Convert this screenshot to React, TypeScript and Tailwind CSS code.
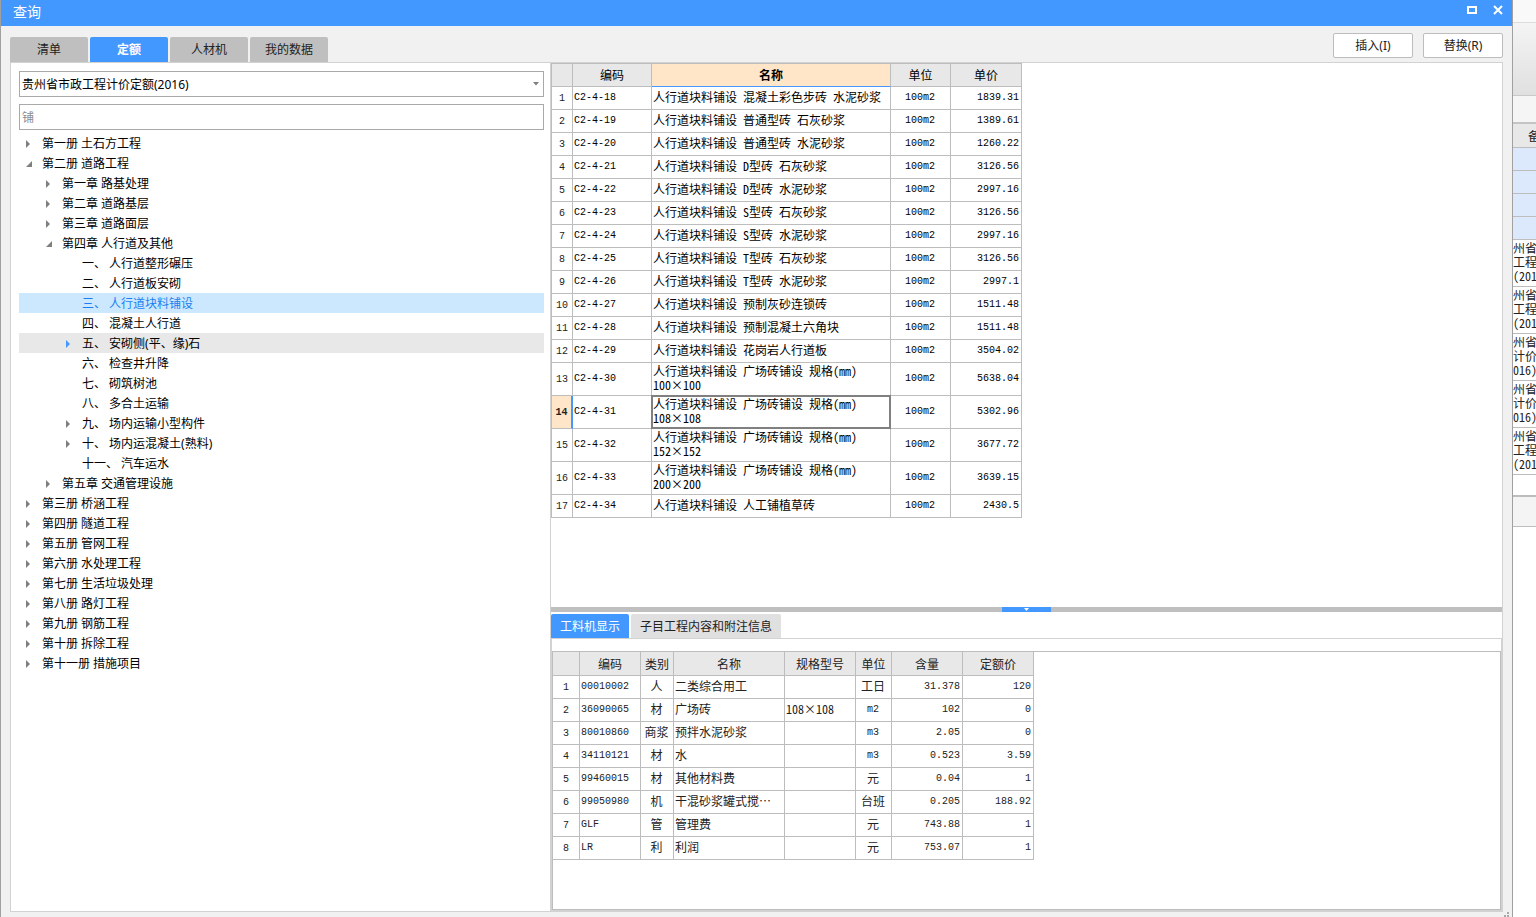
import { useState } from "react";
import clsx from "clsx";

const mainTabs = ["清单", "定额", "人材机", "我的数据"];

type TreeNode = { level: number; text: string; arrow?: "open" | "closed" };

const tree: TreeNode[] = [
  { level: 0, text: "第一册 土石方工程", arrow: "closed" },
  { level: 0, text: "第二册 道路工程", arrow: "open" },
  { level: 1, text: "第一章 路基处理", arrow: "closed" },
  { level: 1, text: "第二章 道路基层", arrow: "closed" },
  { level: 1, text: "第三章 道路面层", arrow: "closed" },
  { level: 1, text: "第四章 人行道及其他", arrow: "open" },
  { level: 2, text: "一、 人行道整形碾压" },
  { level: 2, text: "二、 人行道板安砌" },
  { level: 2, text: "三、 人行道块料铺设" },
  { level: 2, text: "四、 混凝土人行道" },
  { level: 2, text: "五、 安砌侧(平、缘)石", arrow: "closed" },
  { level: 2, text: "六、 检查井升降" },
  { level: 2, text: "七、 砌筑树池" },
  { level: 2, text: "八、 多合土运输" },
  { level: 2, text: "九、 场内运输小型构件", arrow: "closed" },
  { level: 2, text: "十、 场内运混凝土(熟料)", arrow: "closed" },
  { level: 2, text: "十一、 汽车运水" },
  { level: 1, text: "第五章 交通管理设施", arrow: "closed" },
  { level: 0, text: "第三册 桥涵工程", arrow: "closed" },
  { level: 0, text: "第四册 隧道工程", arrow: "closed" },
  { level: 0, text: "第五册 管网工程", arrow: "closed" },
  { level: 0, text: "第六册 水处理工程", arrow: "closed" },
  { level: 0, text: "第七册 生活垃圾处理", arrow: "closed" },
  { level: 0, text: "第八册 路灯工程", arrow: "closed" },
  { level: 0, text: "第九册 钢筋工程", arrow: "closed" },
  { level: 0, text: "第十册 拆除工程", arrow: "closed" },
  { level: 0, text: "第十一册 措施项目", arrow: "closed" },
];

const indents = ["pl-[5px]", "pl-[25px]", "pl-[45px]"];

const quotas = [
  ["C2-4-18", "人行道块料铺设 混凝土彩色步砖 水泥砂浆", "1839.31"],
  ["C2-4-19", "人行道块料铺设 普通型砖 石灰砂浆", "1389.61"],
  ["C2-4-20", "人行道块料铺设 普通型砖 水泥砂浆", "1260.22"],
  ["C2-4-21", "人行道块料铺设 D型砖 石灰砂浆", "3126.56"],
  ["C2-4-22", "人行道块料铺设 D型砖 水泥砂浆", "2997.16"],
  ["C2-4-23", "人行道块料铺设 S型砖 石灰砂浆", "3126.56"],
  ["C2-4-24", "人行道块料铺设 S型砖 水泥砂浆", "2997.16"],
  ["C2-4-25", "人行道块料铺设 T型砖 石灰砂浆", "3126.56"],
  ["C2-4-26", "人行道块料铺设 T型砖 水泥砂浆", "2997.1"],
  ["C2-4-27", "人行道块料铺设 预制灰砂连锁砖", "1511.48"],
  ["C2-4-28", "人行道块料铺设 预制混凝土六角块", "1511.48"],
  ["C2-4-29", "人行道块料铺设 花岗岩人行道板", "3504.02"],
  ["C2-4-30", "人行道块料铺设 广场砖铺设 规格(mm)\n100×100", "5638.04"],
  ["C2-4-31", "人行道块料铺设 广场砖铺设 规格(mm)\n108×108", "5302.96"],
  ["C2-4-32", "人行道块料铺设 广场砖铺设 规格(mm)\n152×152", "3677.72"],
  ["C2-4-33", "人行道块料铺设 广场砖铺设 规格(mm)\n200×200", "3639.15"],
  ["C2-4-34", "人行道块料铺设 人工铺植草砖", "2430.5"],
];

const resources = [
  ["00010002", "人", "二类综合用工", "", "工日", "31.378", "120"],
  ["36090065", "材", "广场砖", "108×108", "m2", "102", "0"],
  ["80010860", "商浆", "预拌水泥砂浆", "", "m3", "2.05", "0"],
  ["34110121", "材", "水", "", "m3", "0.523", "3.59"],
  ["99460015", "材", "其他材料费", "", "元", "0.04", "1"],
  ["99050980", "机", "干混砂浆罐式搅…", "", "台班", "0.205", "188.92"],
  ["GLF", "管", "管理费", "", "元", "743.88", "1"],
  ["LR", "利", "利润", "", "元", "753.07", "1"],
];

const resourceAlign = ["text-left", "text-center", "text-left", "text-left", "text-center", "text-right", "text-right"];

const cell = "border-r border-b border-[#bdbdbd] pt-0 pr-[2px] pl-px";
const headCell = "border-r border-b border-[#bdbdbd] bg-[#e8e8e8] p-0 font-normal";
const gridFont = "font-['Noto_Sans_Mono_CJK_SC','Noto_Sans_CJK_SC',monospace]";
const latin = "pb-0 font-['Liberation_Mono',monospace] text-[10px] leading-[14px]";

const isLatin = (value: string) => /^[\x20-\x7e]+$/.test(value);

function TreeArrow({ type, active }: { type?: "open" | "closed"; active: boolean }) {
  return (
    <svg width="10" height="10" viewBox="0 0 10 10" className="shrink-0">
      {type === "closed" && <path d="M2 1v8l4-4z" fill={active ? "#4398ff" : "#7f7f7f"} />}
      {type === "open" && <path d="M8 2v6H2z" fill="#7f7f7f" />}
    </svg>
  );
}

function QuotaTree() {
  const [selected, setSelected] = useState(8);
  const hovered = 10;

  return (
    <div className="flex w-[539px] shrink-0 flex-col overflow-hidden pt-2 pr-[6px] pl-2">
      <div className="relative">
        <select
          aria-label="定额库"
          className="block h-[26px] w-full appearance-none border border-[#a9a9a9] bg-white px-[2px] pt-[2px] text-xs text-black"
        >
          <option>贵州省市政工程计价定额(2016)</option>
        </select>
        <svg width="6" height="4" viewBox="0 0 6 4" className="pointer-events-none absolute top-[11px] right-[5px]">
          <path d="M0 0h6L3 3.5z" fill="#7f7f7f" />
        </svg>
      </div>
      <input
        type="text"
        aria-label="搜索"
        placeholder="铺"
        className="mt-[7px] h-[26px] w-full border border-[#a9a9a9] bg-white px-[2px] text-xs placeholder:text-[#8c8c8c]"
      />
      <ul className="mt-[3px]">
        {tree.map((node, i) => (
          <li key={node.text}>
            <button
              type="button"
              onClick={() => setSelected(i)}
              className={clsx(
                "flex h-5 w-full items-center gap-2 pt-[2px] text-left whitespace-pre",
                indents[node.level],
                i === selected ? "bg-[#cce8ff] text-[#1a7ff0]" : i === hovered && "bg-[#e8e8e8]"
              )}
            >
              <TreeArrow type={node.arrow} active={i === hovered} />
              {node.text}
            </button>
          </li>
        ))}
      </ul>
    </div>
  );
}

function QuotaTable() {
  const current = 13;

  return (
    <table className={clsx("w-[471px] table-fixed border-separate border-spacing-0 border-t border-l border-[#bdbdbd] leading-[14px] text-black", gridFont)}>
      <colgroup>
        <col className="w-[21px]" />
        <col className="w-[79px]" />
        <col className="w-[239px]" />
        <col className="w-[60px]" />
        <col className="w-[71px]" />
      </colgroup>
      <thead>
        <tr className="h-[23px]">
          <th className={headCell} aria-label="序号"></th>
          <th className={headCell}>编码</th>
          <th className="border-r border-b border-r-[#bdbdbd] border-b-[#4398ff] bg-[#ffe6c8] p-0 font-bold">名称</th>
          <th className={headCell}>单位</th>
          <th className={headCell}>单价</th>
        </tr>
      </thead>
      <tbody>
        {quotas.map(([code, name, price], i) => (
          <tr key={code} className={name.includes("\n") ? "h-[33px]" : "h-[23px]"}>
            <th
              className={clsx(
                "border-b border-b-[#bdbdbd] px-0 pt-[2px] text-[#222]",
                latin,
                i === current
                  ? "border-r-2 border-r-[#4398ff] bg-[#ffe6c8] font-bold"
                  : "border-r border-r-[#bdbdbd] font-normal"
              )}
            >
              {i + 1}
            </th>
            <td className={clsx(cell, latin)}>{code}</td>
            <td className={clsx(cell, "relative pb-[2px] whitespace-pre")}>
              {name}
              {i === current && <span className="absolute -inset-px border-2 border-[#808080]"></span>}
            </td>
            <td className={clsx(cell, latin, "text-center")}>100m2</td>
            <td className={clsx(cell, latin, "text-right")}>{price}</td>
          </tr>
        ))}
      </tbody>
    </table>
  );
}

function ResourceTable() {
  return (
    <table className={clsx("w-[481px] table-fixed border-separate border-spacing-0 leading-[14px] text-[#222]", gridFont)}>
      <colgroup>
        <col className="w-[27px]" />
        <col className="w-[61px]" />
        <col className="w-[33px]" />
        <col className="w-[111px]" />
        <col className="w-[71px]" />
        <col className="w-[36px]" />
        <col className="w-[71px]" />
        <col className="w-[71px]" />
      </colgroup>
      <thead>
        <tr className="h-6">
          <th className={headCell} aria-label="序号"></th>
          {["编码", "类别", "名称", "规格型号", "单位", "含量", "定额价"].map((title) => (
            <th key={title} className={headCell}>{title}</th>
          ))}
        </tr>
      </thead>
      <tbody>
        {resources.map((row, i) => (
          <tr key={row[0]} className="h-[23px]">
            <th className={clsx("border-r border-b border-[#bdbdbd] px-0 pt-[2px] font-normal", latin)}>{i + 1}</th>
            {row.map((value, j) => (
              <td
                key={j}
                className={clsx(cell, "whitespace-nowrap", resourceAlign[j], isLatin(value) ? latin : "pb-[2px]")}
              >
                {value}
              </td>
            ))}
          </tr>
        ))}
      </tbody>
    </table>
  );
}

// the part of the main window that is still visible behind the dialog
function BackgroundWindow() {
  const notes = ["州省\n工程\n(201", "州省\n工程\n(201", "州省\n计价\n016)", "州省\n计价\n016)", "州省\n工程\n(201"];

  return (
    <div className={clsx("flex w-[23px] shrink-0 flex-col overflow-hidden bg-white text-[#222]", gridFont)}>
      <div className="h-[23px] shrink-0 border-b border-[#dcdcdc] bg-[#f9f9f9]"></div>
      <div className="h-[73px] shrink-0 border-b border-[#c8c8c8] bg-linear-to-b from-[#f4f4f4] to-[#e0e0e0]"></div>
      <div className="h-7 shrink-0 border-b-2 border-[#c4c4c4] bg-[#f5f5f5]"></div>
      <div className="flex h-6 shrink-0 items-center border-b border-[#bdbdbd] bg-[#e8e8e8] pl-[15px]">备</div>
      {[0, 1, 2, 3].map((n) => (
        <div key={n} className="h-[23px] shrink-0 border-b border-[#bdbdbd] bg-[#dce9fd]"></div>
      ))}
      {notes.map((note, n) => (
        <div key={n} className="h-[47px] shrink-0 border-b border-[#bdbdbd] pt-px leading-[14px] whitespace-pre">
          {note}
        </div>
      ))}
      <div className="h-[22px] shrink-0 border-b-2 border-[#bdbdbd]"></div>
      <div className="h-[30px] shrink-0 border-b border-[#bdbdbd] bg-[#f4f4f4]"></div>
    </div>
  );
}

function App() {
  const [tab, setTab] = useState("定额");

  return (
    <div className="flex h-screen overflow-hidden bg-white font-['Noto_Sans','Noto_Sans_CJK_SC',sans-serif] text-xs text-black">
      <main className="flex min-w-0 flex-1 flex-col border-x border-[#a0a0a0] bg-[#f1f1f1]">
        <header className="flex h-[26px] shrink-0 items-center justify-between bg-[#4398ff] pr-[9px] pl-3">
          <h1 className="pb-[2px] text-sm leading-5 text-white">查询</h1>
          <div className="flex gap-4 pb-[6px]">
            <button type="button" aria-label="最大化">
              <svg width="10" height="10" viewBox="0 0 10 10" className="block">
                <path d="M1 2h8v6H1z" fill="none" stroke="#fff" strokeWidth="2" />
              </svg>
            </button>
            <button type="button" aria-label="关闭">
              <svg width="10" height="10" viewBox="0 0 10 10" className="block">
                <path d="M1 1l8 8M9 1L1 9" fill="none" stroke="#fff" strokeWidth="2" />
              </svg>
            </button>
          </div>
        </header>

        <div className="flex h-9 shrink-0 items-end justify-between px-[9px]">
          <div className="flex gap-[2px]">
            {mainTabs.map((name) => (
              <button
                key={name}
                type="button"
                onClick={() => setTab(name)}
                className={clsx(
                  "h-[25px] w-[78px] rounded-t-xs",
                  name === tab ? "bg-[#4398ff] font-bold text-white" : "bg-[#bfbfbf] text-[#222]"
                )}
              >
                {name}
              </button>
            ))}
          </div>
          <div className="flex gap-[10px] pb-1">
            <button type="button" className="h-[25px] w-20 rounded-xs border border-[#bdbdbd] bg-white text-[#222]">插入(I)</button>
            <button type="button" className="h-[25px] w-20 rounded-xs border border-[#bdbdbd] bg-white text-[#222]">替换(R)</button>
          </div>
        </div>

        <div className="mx-[9px] flex min-h-0 flex-1 border border-[#d2d2d2] bg-white">
          <QuotaTree />

          <div className="flex min-w-0 flex-1 flex-col border-l border-[#d2d2d2]">
            <div className="min-h-0 flex-1 overflow-hidden">
              <QuotaTable />
            </div>

            <div className="flex h-[5px] shrink-0 justify-center bg-[#bfbfbf]">
              <button type="button" aria-label="收起" className="flex w-[49px] items-center justify-center bg-[#4398ff]">
                <svg width="5" height="3" viewBox="0 0 5 3">
                  <path d="M0 0h5L2.5 3z" fill="#fff" />
                </svg>
              </button>
            </div>

            <div className="flex h-[299px] shrink-0 flex-col pt-[2px]">
              <div className="flex shrink-0 gap-[2px]">
                <button type="button" className="h-6 w-[78px] rounded-t-xs bg-[#4398ff] pt-px text-white">工料机显示</button>
                <button type="button" className="h-6 w-[150px] rounded-t-xs bg-[#e0e0e0] pt-px text-[#222]">子目工程内容和附注信息</button>
              </div>
              <div className="flex min-h-0 flex-1 flex-col border border-[#d2d2d2] pt-3">
                <div className="min-h-0 flex-1 border border-[#bdbdbd]">
                  <ResourceTable />
                </div>
              </div>
            </div>
          </div>
        </div>

        <footer className="flex h-[5px] shrink-0 justify-end pr-[3px]">
          <svg width="5" height="5" viewBox="0 0 5 5">
            <path d="M3 0h2v2H3zM0 3h2v2H0zM3 3h2v2H3z" fill="#a9a9a9" />
          </svg>
        </footer>
      </main>
      <BackgroundWindow />
    </div>
  );
}

export default App;
